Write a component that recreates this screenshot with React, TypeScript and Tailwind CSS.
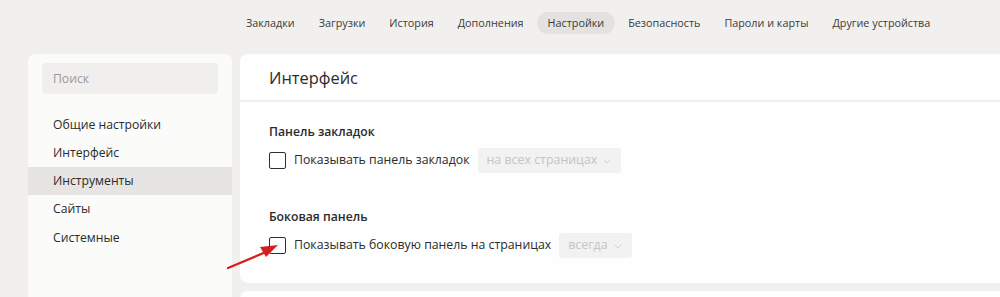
import React from "react";

const navItems = [
    "Закладки",
    "Загрузки",
    "История",
    "Дополнения",
    "Настройки",
    "Безопасность",
    "Пароли и карты",
    "Другие устройства",
];

const menu = ["Общие настройки", "Интерфейс", "Инструменты", "Сайты", "Системные"];

function Checkbox() {
    return <span className="block w-[17px] h-[17px] shrink-0 rounded-[2px] border-[1.5px] border-[#2f2f2f] bg-white" />;
}

function Select({ label }: { label: string }) {
    return (
        <div className="flex items-center h-[25px] pl-[9px] pr-[10px] rounded-[3px] bg-[#f2f2f2] text-[12.4px] text-[#c4c4c4]">
            <span>{label}</span>
            <svg width="8" height="5" viewBox="0 0 8 5" className="ml-[6px] mt-[2px]">
                <path d="M1 1l3 3 3-3" fill="none" stroke="#cfcfcf" strokeWidth="1" />
            </svg>
        </div>
    );
}

export default function App() {
    return (
        <div
            className="relative w-[1000px] h-[297px] overflow-hidden bg-[#f2f0ee] text-[#2b2b2b]"
            style={{ fontFamily: '"Open Sans", "Noto Sans", sans-serif' }}
        >
            <nav className="flex gap-[2px] h-[54px] pt-[12px] pl-[235px]">
                {navItems.map((item) => (
                    <span
                        key={item}
                        className={
                            "h-[22px] px-[11px] pt-[1px] flex items-center rounded-full text-[10.8px] text-[#3a3a3a] " +
                            (item === "Настройки" ? "bg-[#e4e2e0]" : "")
                        }
                    >
                        {item}
                    </span>
                ))}
            </nav>

            <div className="flex gap-[8px] pl-[28px]">
                <aside className="w-[204px] h-[260px] shrink-0 rounded-t-[8px] bg-[#fbfbfa] pt-[9px]">
                    <div className="mx-[14px] h-[31px] rounded-[4px] bg-[#f0efed] flex items-center px-[11px] pt-[1px] text-[12.2px] text-[#9a9a9a]">
                        Поиск
                    </div>
                    <ul className="mt-[16px]">
                        {menu.map((m) => (
                            <li
                                key={m}
                                className={
                                    "h-[28.3px] flex items-center pl-[25px] pt-[1px] text-[12.2px] text-[#2b2b2b] " +
                                    (m === "Инструменты" ? "bg-[#e6e5e3]" : "")
                                }
                            >
                                {m}
                            </li>
                        ))}
                    </ul>
                </aside>

                <div className="flex-1 flex flex-col gap-[8px]">
                    <main className="rounded-l-[8px] bg-[#fefefe]">
                        <h1 className="h-[48px] flex items-center px-[29px] pt-[3px] text-[16.4px] text-[#2b2b2b] border-b-2 border-[#efeeec]">
                            Интерфейс
                        </h1>
                        <div className="px-[29px] pt-[21px] pb-[25px]">
                            <h2 className="text-[12.2px] leading-[18px] font-semibold">Панель закладок</h2>
                            <div className="mt-[7px] flex items-center gap-[8px] text-[12.3px]">
                                <Checkbox />
                                <span>Показывать панель закладок</span>
                                <Select label="на всех страницах" />
                            </div>
                            <h2 className="mt-[35px] text-[12.2px] leading-[18px] font-semibold">Боковая панель</h2>
                            <div className="mt-[7px] flex items-center gap-[8px] text-[12.3px]">
                                <Checkbox />
                                <span>Показывать боковую панель на страницах</span>
                                <Select label="всегда" />
                            </div>
                        </div>
                    </main>
                    <section className="h-[40px] rounded-l-[8px] bg-[#fefefe]" />
                </div>
            </div>

            <svg className="absolute left-[220px] top-[238px]" width="70" height="40" viewBox="0 0 70 40">
                <line x1="8" y1="30" x2="46" y2="14" stroke="#d3201f" strokeWidth="2.2" strokeLinecap="round" />
                <polygon points="58,7 40,9 46,19" fill="#d3201f" />
            </svg>
        </div>
    );
}
